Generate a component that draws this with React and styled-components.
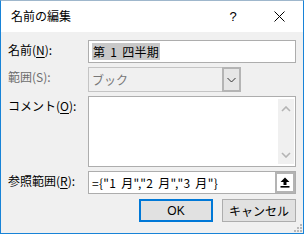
import React from 'react';
import styled, { createGlobalStyle } from 'styled-components';

const Global = createGlobalStyle`
    html, body {
        margin: 0;
        padding: 0;
        background: #ffffff;
    }
    body {
        font-family: "Noto Sans CJK JP", "Noto Sans", sans-serif;
        font-size: 12px;
        color: #000;
    }
`;

export default function App() {
    return (
        <>
            <Global />
            <Window>
                <TitleBar>
                    <Title>名前の編集</Title>
                    <Help>?</Help>
                    <Close>
                        <svg width="11" height="11" viewBox="0 0 11 11">
                            <path d="M0.5 0.5 L10.5 10.5 M10.5 0.5 L0.5 10.5" stroke="#000" strokeWidth="1" />
                        </svg>
                    </Close>
                </TitleBar>
                <Body>
                    <Row $h={23}>
                        <Label>名前(<u>N</u>):</Label>
                        <TextBox>
                            <Selected>第 1 四半期</Selected>
                        </TextBox>
                    </Row>
                    <Row $h={25}>
                        <Label $disabled>範囲(S):</Label>
                        <Select>
                            <SelectText>ブック</SelectText>
                            <DropButton>
                                <svg width="9" height="6" viewBox="0 0 9 6">
                                    <path d="M0.5 1 L4.5 5 L8.5 1" stroke="#333" strokeWidth="1" fill="none" />
                                </svg>
                            </DropButton>
                        </Select>
                    </Row>
                    <Row $h={71}>
                        <Label>コメント(<u>O</u>):</Label>
                        <TextArea>
                            <ScrollBar>
                                <svg width="10" height="6" viewBox="0 0 10 6">
                                    <path d="M1 5 L5 1 L9 5" stroke="#b4b4b4" strokeWidth="1.6" fill="none" />
                                </svg>
                                <svg width="10" height="6" viewBox="0 0 10 6">
                                    <path d="M1 1 L5 5 L9 1" stroke="#b4b4b4" strokeWidth="1.6" fill="none" />
                                </svg>
                            </ScrollBar>
                        </TextArea>
                    </Row>
                    <Row $h={23}>
                        <Label>参照範囲(<u>R</u>):</Label>
                        <RefBox>
                            <RefText>={'{'}"1 月","2 月","3 月"{'}'}</RefText>
                            <CollapseButton>
                                <svg width="10" height="11" viewBox="0 0 10 11">
                                    <path d="M5 0.5 L9.5 5 L6.5 5 L6.5 8 L3.5 8 L3.5 5 L0.5 5 Z" fill="#000" />
                                    <rect x="0.5" y="9" width="9" height="1.6" fill="#000" />
                                </svg>
                            </CollapseButton>
                        </RefBox>
                    </Row>
                    <Buttons>
                        <Button $primary>OK</Button>
                        <Button>キャンセル</Button>
                    </Buttons>
                    <Grip>
                        <svg width="8" height="8" viewBox="0 0 8 8">
                            <g fill="#b8b8b8">
                                <rect x="6" y="0" width="2" height="2" />
                                <rect x="3" y="3" width="2" height="2" />
                                <rect x="6" y="3" width="2" height="2" />
                                <rect x="0" y="6" width="2" height="2" />
                                <rect x="3" y="6" width="2" height="2" />
                                <rect x="6" y="6" width="2" height="2" />
                            </g>
                        </svg>
                    </Grip>
                </Body>
            </Window>
        </>
    );
}

const Window = styled.div`
    width: 304px;
    height: 234px;
    box-sizing: border-box;
    border: 1px solid #1883d7;
    border-top-color: #9fb7cc;
    display: flex;
    flex-direction: column;
    overflow: hidden;
`;

const TitleBar = styled.div`
    height: 31px;
    background: #ffffff;
    display: flex;
    align-items: center;
    padding-left: 10px;
    flex-shrink: 0;
`;

const Title = styled.div`
    flex: 1;
    font-size: 12px;
    line-height: 16px;
    margin-top: -1px;
`;

const Help = styled.div`
    width: 46px;
    text-align: center;
    font-family: "Liberation Sans", sans-serif;
    font-size: 13px;
`;

const Close = styled.div`
    width: 46px;
    display: flex;
    justify-content: center;
    align-items: center;
    margin-right: 1px;
`;

const Body = styled.div`
    position: relative;
    flex: 1;
    background: #f0f0f0;
    padding: 8px 6px 0 7px;
    display: flex;
    flex-direction: column;
    gap: 4px;
`;

const Row = styled.div`
    display: grid;
    grid-template-columns: 80px 208px;
    height: ${p => p.$h}px;
`;

const Label = styled.div`
    padding-top: 2px;
    line-height: 16px;
    font-size: 12px;
    color: ${p => (p.$disabled ? '#6d6d6d' : '#000')};
    white-space: nowrap;
    u {
        text-underline-offset: 2px;
    }
`;

const TextBox = styled.div`
    box-sizing: border-box;
    height: 23px;
    border: 1px solid #adadad;
    background: #fff;
    display: flex;
    align-items: center;
    padding-left: 3px;
`;

const Selected = styled.span`
    background: #c8c8c8;
    font-size: 12px;
    line-height: 17px;
    padding: 0 1px;
    letter-spacing: 0.3px;
    word-spacing: 2px;
    white-space: pre;
`;

const Select = styled.div`
    box-sizing: border-box;
    width: 153px;
    height: 25px;
    border: 1px solid #c4c4c4;
    background: #f0f0f0;
    display: flex;
    align-items: stretch;
`;

const SelectText = styled.div`
    flex: 1;
    color: #787878;
    font-size: 12px;
    display: flex;
    align-items: center;
    padding-left: 3px;
`;

const DropButton = styled.div`
    box-sizing: border-box;
    width: 19px;
    border: 2px solid #b4b4b4;
    margin: -1px -1px -1px 0;
    background: #e6e6e6;
    display: flex;
    align-items: center;
    justify-content: center;
`;

const TextArea = styled.div`
    box-sizing: border-box;
    height: 71px;
    border: 1px solid #adadad;
    background: #fff;
    display: flex;
    justify-content: flex-end;
    padding: 2px 1px 2px 0;
`;

const ScrollBar = styled.div`
    width: 16px;
    background: #f0f0f0;
    display: flex;
    flex-direction: column;
    justify-content: space-between;
    align-items: center;
    padding: 7px 0 6px;
`;

const RefBox = styled.div`
    box-sizing: border-box;
    height: 23px;
    border: 1px solid #adadad;
    background: #fff;
    display: flex;
    align-items: stretch;
`;

const RefText = styled.div`
    flex: 1;
    display: flex;
    align-items: center;
    padding-left: 3px;
    font-size: 12px;
    letter-spacing: 0.3px;
    word-spacing: 2px;
    white-space: pre;
`;

const CollapseButton = styled.div`
    box-sizing: border-box;
    width: 20px;
    border: 2px solid #b4b4b4;
    background: #fff;
    display: flex;
    align-items: center;
    justify-content: center;
`;

const Buttons = styled.div`
    display: flex;
    justify-content: flex-end;
    gap: 9px;
    margin-top: 1px;
    width: 288px;
`;

const Button = styled.div`
    box-sizing: border-box;
    width: 74px;
    height: 23px;
    background: #e1e1e1;
    border: ${p => (p.$primary ? '2px solid #0078d7' : '1px solid #adadad')};
    display: flex;
    align-items: center;
    justify-content: center;
    font-size: 12px;
    font-family: ${p => (p.$primary ? '"Liberation Sans", sans-serif' : 'inherit')};
`;

const Grip = styled.div`
    position: absolute;
    right: 1px;
    bottom: 1px;
    line-height: 0;
`;
